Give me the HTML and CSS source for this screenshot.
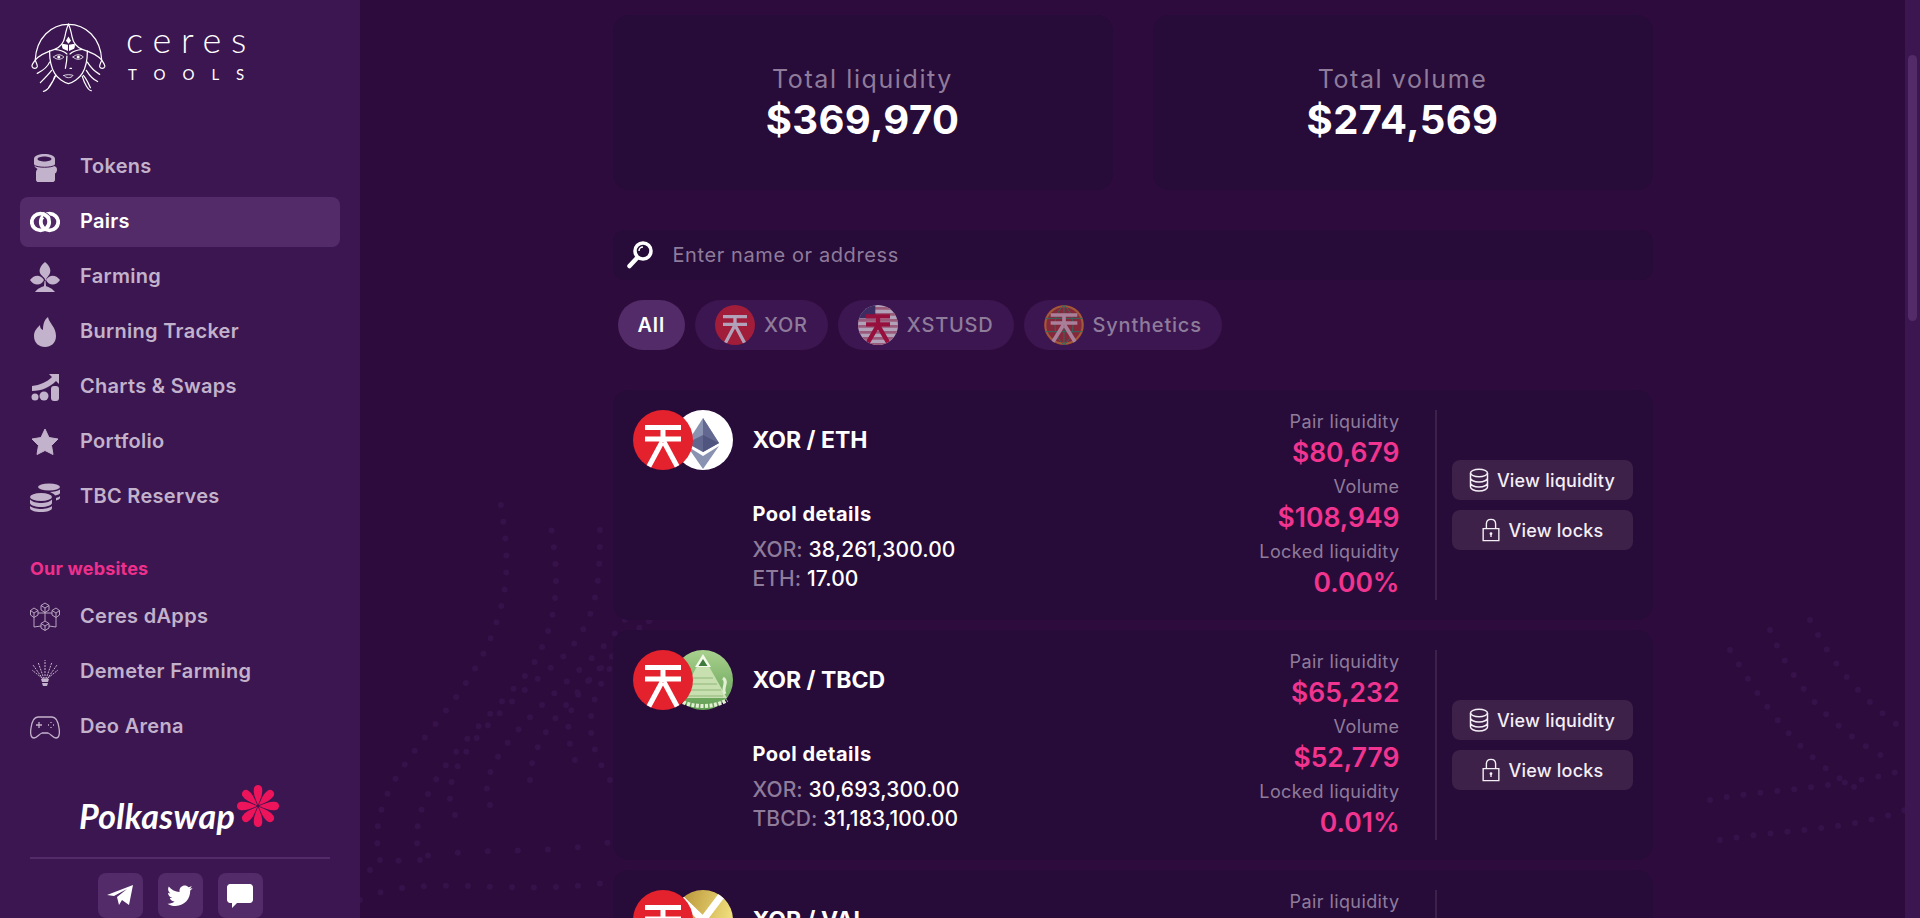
FILE: index.html
```html
<!DOCTYPE html>
<html lang="en">
  <head>
    <meta charset="UTF-8" />
    <title>Ceres Tools - Pairs</title>
    <link rel="stylesheet" href="styles.css">
  </head>
  <body>
    <!-- token logos, reused in the chips and the pair cards -->
    <svg class="sprite" aria-hidden="true">
      <defs>
        <clipPath id="round"><circle cx="30" cy="30" r="30"/></clipPath>
        <linearGradient id="gold" x1="0" y1="0" x2="1" y2="0.3">
          <stop offset="0" stop-color="#b08a2e"/>
          <stop offset="1" stop-color="#f0dd7c"/>
        </linearGradient>
        <linearGradient id="green" x1="0" y1="0" x2="0" y2="1">
          <stop offset="0" stop-color="#a9d18e"/>
          <stop offset="1" stop-color="#5f9e52"/>
        </linearGradient>
      </defs>
      <symbol id="glyph" viewBox="0 0 60 60">
        <path d="M12 17.500H48M12 29H48M30 17.500V32M29 32L15 58M31 32L45 58" fill="none" stroke="currentColor" stroke-width="5"/>
      </symbol>
      <symbol id="xor" viewBox="0 0 60 60">
        <g clip-path="url(#round)">
          <rect width="60" height="60" fill="#e4222d"/>
          <use href="#glyph" width="60" height="60" color="#fff"/>
        </g>
      </symbol>
      <symbol id="eth" viewBox="0 0 60 60">
        <circle cx="30" cy="30" r="30" fill="#fff"/>
        <path d="M30 8L14 33L30 42L46 33Z" fill="#8a92b2"/>
        <path d="M30 8V42L46 33Z" fill="#62688f"/>
        <path d="M14 36L30 59L46 36L30 46Z" fill="#8a92b2"/>
        <path d="M30 25L14 33L30 42L46 33Z" fill="#454a75" opacity=".6"/>
      </symbol>
      <symbol id="tbcd" viewBox="0 0 60 60">
        <circle cx="30" cy="30" r="30" fill="url(#green)"/>
        <path d="M30 6L54 48H6Z" fill="#c8dfb0"/>
        <path d="M30 4L38 17H22Z" fill="#f4f9ea"/>
        <path d="M30 9L34.500 16H25.500Z" fill="#3e7a3b"/>
        <path d="M12 40H48M10 46H50M16 34H44M20 28H40" stroke="#a3c58a" stroke-width="1.500"/>
        <path d="M6 50C18 58 42 58 54 50" fill="none" stroke="#e3efd4" stroke-width="4" stroke-dasharray="3 1.500"/>
        <path d="M50 28C56 32 48 38 52 44" fill="none" stroke="#e3efd4" stroke-width="3"/>
      </symbol>
      <symbol id="val" viewBox="0 0 60 60">
        <g clip-path="url(#round)">
          <rect width="60" height="60" fill="url(#gold)"/>
          <path d="M2 3L30 30L52 1M30 30V60" fill="none" stroke="#fff" stroke-width="7"/>
        </g>
      </symbol>
      <symbol id="xstusd" viewBox="0 0 60 60">
        <g clip-path="url(#round)">
          <rect width="60" height="60" fill="#fff"/>
          <path d="M0 5H60M0 14H60M0 23H60M0 32H60M0 41H60M0 50H60M0 59H60" stroke="#d98a96" stroke-width="4"/>
          <rect width="26" height="20" fill="#3c3b6e"/>
          <path d="M12 17H48M12 29H48M30 17V32M29 32L15 56M31 32L45 56" fill="none" stroke="#d40c32" stroke-width="6.500"/>
        </g>
      </symbol>
      <symbol id="synth" viewBox="0 0 60 60">
        <g clip-path="url(#round)">
          <rect width="60" height="60" fill="#b8352f"/>
          <circle cx="30" cy="30" r="28" fill="none" stroke="#e08a2a" stroke-width="3"/>
          <path d="M30 0C12 15 12 45 30 60C48 45 48 15 30 0ZM0 20H60M0 40H60M30 0V60" fill="none" stroke="#27a06a" stroke-width="1.500"/>
          <path d="M10 15H50M10 27H50M30 15V30M29 30L13 56M31 30L47 56" fill="none" stroke="#f2c6cc" stroke-width="5.500"/>
        </g>
      </symbol>
    </svg>

    <div class="app">
      <aside class="sidebar">
        <div class="brand">
          <svg class="brand-logo" viewBox="0 0 90 80" fill="none" stroke="#fff" stroke-width="1.200" stroke-linecap="round">
            <path d="M11 44C12 22 27 9 43.500 9C60 9 75 22 76 44"/>
            <path d="M11 44C9 47 7 49 8 50.500C9 52.500 12 52.500 13 50.500C13.500 49 12 47 11 44C15 39 22 36 30 33.500C36 31 39 27 40 21C41 16 42 12 43.500 9C45 12 46 16 47 21C48 27 51 31 57 33.500C65 36 72 39 76 44C75 47 73.500 49 74 50.500C75 52.500 78 52.500 79 50.500C79.500 49 78 47 76 44"/>
            <path d="M25 35C25 43 27 52 30 57C33 62 39 66 43.500 67C48 66 54 62 57 57C60 52 62 43 62 35"/>
            <path d="M30 33.500C35 34 39 35 42 38M57 33.500C52 34 48 35 45 38"/>
            <path d="M29 41C32 38 36 38 39 41C36 44 32 44 29 41ZM48 41C51 38 55 38 58 41C55 44 51 44 48 41Z" stroke-width=".8"/>
            <circle cx="34" cy="41" r="1.500" fill="#fff" stroke="none"/>
            <circle cx="53" cy="41" r="1.500" fill="#fff" stroke="none"/>
            <path d="M42 40C42 45 41 49 40.500 52M45 52H46.500"/>
            <path d="M39 59C41 58 46 58 48 59C46 62 41 62 39 59Z" stroke-width=".8"/>
            <path d="M43.500 21L46 25L43.500 28L41 25Z" fill="#fff" stroke="none"/>
            <path d="M43 29L43 35L38 33C37 31 37 30 37.500 28ZM44 29V35L49 33C50 31 50 30 49.500 28Z" fill="#fff" stroke="none"/>
            <path d="M25 46C23 51 19 54 13 57M27 54C24 58 20 62 16 66M31 59C29 64 26 68 24 71M58 59C61 62 63 67 65 71M61 54C64 59 68 63 72 65M62 46C65 51 69 55 74 58M30 60C28 67 23 74 19 74.500M57 60C59 67 63 74 66 74"/>
          </svg>
          <div class="brand-text">
            <span class="brand-name">ceres</span>
            <span class="brand-sub">TOOLS</span>
          </div>
        </div>

        <nav class="nav">
          <a class="nav-item">
            <svg class="nav-icon" viewBox="0 0 30 30" fill="currentColor"><path fill-rule="evenodd" d="M4 7C4 3.500 9 2 14.500 2S25 3.500 25 7V12C25 13 24.500 13.500 24 14C26 14.500 27 15.500 27 17.500C27 20 26 21 25 21.500V28C25 30 20 32 15 32S6 30 6 28V20C6 19 6.500 18 7.500 17C5.500 16 4 14 4 12ZM14.500 4.500C11 4.500 7.500 5.500 7.500 7S11 9.500 14.500 9.500S21.500 8.500 21.500 7S18 4.500 14.500 4.500Z"/><path d="M4 13C7 16 22 16 25 13" fill="none" stroke="#3c1650" stroke-width="1"/></svg>
            <span>Tokens</span>
          </a>
          <a class="nav-item active">
            <svg class="nav-icon" viewBox="0 0 30 30" fill="none" stroke="currentColor" stroke-width="3.800">
              <ellipse cx="10.500" cy="15" rx="8.700" ry="8.400"/>
              <ellipse cx="19.500" cy="15" rx="8.700" ry="8.400"/>
              <path d="M14 7.600C17 9 19.200 11.800 19.200 15" stroke="#522b68" stroke-width="5.800"/>
              <path d="M12.500 6.800C16.500 7.800 19.200 11 19.200 15"/>
            </svg>
            <span>Pairs</span>
          </a>
          <a class="nav-item">
            <svg class="nav-icon" viewBox="0 0 30 30" fill="currentColor"><path d="M15 0C20 4 21 8 20 11C19 14 16.500 15 15.700 19C15 15 11 14 10 11C9 8 10 4 15 0ZM0 18C4 13 10 12 14 18C11 24 4 24 0 18ZM30 18C26 13 20 12 16 18C19 24 26 24 30 18ZM14.500 19H15.500L16 24C18 25 22 26 25 30H5C8 26 12 25 14 24Z"/></svg>
            <span>Farming</span>
          </a>
          <a class="nav-item">
            <svg class="nav-icon" viewBox="0 0 30 30" fill="currentColor"><path d="M18 0C19 6 26 10 26 19C26 26 21 30 15 30S4 26 4 19C4 14 7 11 10 8C10 11 11 12 13 13C13 8 14 3 18 0Z"/></svg>
            <span>Burning Tracker</span>
          </a>
          <a class="nav-item">
            <svg class="nav-icon" viewBox="0 0 30 30" fill="currentColor"><path d="M2 14C10 13 17 10 22 5L19 2H29V12L26 9C20 15 12 19 2 19Z"/><circle cx="5" cy="25" r="3.500"/><circle cx="14" cy="24" r="4.500"/><rect x="21" y="14" width="8" height="15" rx="3"/></svg>
            <span>Charts &amp; Swaps</span>
          </a>
          <a class="nav-item">
            <svg class="nav-icon" viewBox="0 0 30 30" fill="currentColor"><path d="M15 2L19 10.500L28 12L21.500 18.500L23 27.500L15 23.500L7 27.500L8.500 18.500L2 12L11 10.500Z" stroke="currentColor" stroke-linejoin="round"/></svg>
            <span>Portfolio</span>
          </a>
          <a class="nav-item">
            <svg class="nav-icon" viewBox="0 0 30 30" fill="currentColor"><ellipse cx="19" cy="5" rx="11" ry="3.500"/><path d="M20 10C24 10 28 9 30 7.500V11C30 12 28 13 25 13.500C24 11.500 22 11 20 10ZM26 16C28 15.500 29 15 30 14V16C30 17 28 18 26 18.500Z"/><ellipse cx="11" cy="15" rx="11" ry="4"/><path d="M0 17.500C2 20 7 21 11 21S20 20 22 17.500V21C22 23 17 25 11 25S0 23 0 21ZM0 24C2 26 7 27 11 27S20 26 22 24V26C22 28.500 17 30 11 30S0 28.500 0 26Z"/></svg>
            <span>TBC Reserves</span>
          </a>
        </nav>

        <div class="nav-title">Our websites</div>
        <nav class="nav">
          <a class="nav-item">
            <svg class="nav-icon" viewBox="0 0 30 30" fill="none" stroke="currentColor" stroke-width=".9"><path d="M15 1L19 3.500V8L15 10.500L11 8V3.500ZM11 3.500L15 6L19 3.500M15 6V10.500M4 6L8 8.500V13L4 15.500L0.500 13V8.500ZM0.500 8.500L4 11L8 8.500M4 11V15.500M26 6L29.500 8.500V13L26 15.500L22 13V8.500ZM22 8.500L26 11L29.500 8.500M26 11V15.500M15 19L19 21.500V26L15 28.500L11 26V21.500ZM11 21.500L15 24L19 21.500M15 24V28.500M4 15.500V25L11 24M26 15.500V25L19 24M8 11H22M15 10.500V19"/></svg>
            <span>Ceres dApps</span>
          </a>
          <a class="nav-item">
            <svg class="nav-icon" viewBox="0 0 30 30" fill="none" stroke="currentColor" stroke-width="1"><path d="M13 22L3 8M14 22L8 5M15 22V3M16 22L22 5M17 22L27 8M12 21L2 13M18 21L28 13" stroke-dasharray="2 1"/><path d="M11 22H19L18 25H12ZM12 26H18L17 29H13Z" fill="currentColor" stroke="none"/></svg>
            <span>Demeter Farming</span>
          </a>
          <a class="nav-item">
            <svg class="nav-icon" viewBox="0 0 30 30" fill="none" stroke="currentColor" stroke-width="1.300"><path d="M8 5H22C26 5 28 9 29 16C30 22 29 26 26 26C23 26 21 22 18 21H12C9 22 7 26 4 26C1 26 0 22 1 16C2 9 4 5 8 5Z"/><path d="M6 13H12M9 10V16M21 10V11M21 15V16M18 13H19M23 13H24"/></svg>
            <span>Deo Arena</span>
          </a>
        </nav>

        <div class="polka">
          <span class="polka-name">Polkaswap</span>
          <svg class="polka-flower" viewBox="0 0 46 46" fill="#ed145b">
            <path d="M23 22C20 15 18 10 19 5C20 1 26 1 27 5C28 10 26 15 23 22Z"/>
            <path d="M23 22C20 15 18 10 19 5C20 1 26 1 27 5C28 10 26 15 23 22Z" transform="rotate(45 23 23)"/>
            <path d="M23 22C20 15 18 10 19 5C20 1 26 1 27 5C28 10 26 15 23 22Z" transform="rotate(90 23 23)"/>
            <path d="M23 22C20 15 18 10 19 5C20 1 26 1 27 5C28 10 26 15 23 22Z" transform="rotate(135 23 23)"/>
            <path d="M23 22C20 15 18 10 19 5C20 1 26 1 27 5C28 10 26 15 23 22Z" transform="rotate(180 23 23)"/>
            <path d="M23 22C20 15 18 10 19 5C20 1 26 1 27 5C28 10 26 15 23 22Z" transform="rotate(225 23 23)"/>
            <path d="M23 22C20 15 18 10 19 5C20 1 26 1 27 5C28 10 26 15 23 22Z" transform="rotate(270 23 23)"/>
            <path d="M23 22C20 15 18 10 19 5C20 1 26 1 27 5C28 10 26 15 23 22Z" transform="rotate(315 23 23)"/>
          </svg>
        </div>
        <div class="side-line"></div>
        <div class="socials">
          <a class="social"><svg viewBox="0 0 26 24" fill="#fff"><path d="M0 11L26 1L22 21L15 16L12 21L10 13L20 5L7 12Z"/></svg></a>
          <a class="social"><svg viewBox="0 0 26 24" fill="#fff"><path d="M25.500 4C24.500 4.500 23.500 4.700 22.500 4.800C23.600 4.100 24.400 3.100 24.800 2C23.800 2.600 22.700 3 21.500 3.200C20.500 2.200 19.200 1.500 17.700 1.500C14.800 1.500 12.500 3.800 12.500 6.700C12.500 7.100 12.500 7.500 12.600 7.900C8.300 7.700 4.400 5.600 1.800 2.400C1.400 3.200 1.100 4.100 1.100 5C1.100 6.800 2 8.400 3.400 9.300C2.500 9.300 1.700 9 1 8.700C1 11.200 2.800 13.300 5.200 13.800C4.400 14 3.500 14.100 2.800 13.900C3.400 15.900 5.400 17.500 7.600 17.500C5.800 18.900 3 20 0.500 19.700C2.800 21.200 5.500 22 8.500 22C18 22 23.200 14.100 23.200 7.300V6.600C24.100 5.900 24.900 5 25.500 4Z"/></svg></a>
          <a class="social"><svg viewBox="0 0 26 24" fill="#fff"><path d="M3 0H23C24.500 0 26 1.500 26 3V16C26 17.500 24.500 19 23 19H10L5 24V19H3C1.500 19 0 17.500 0 16V3C0 1.500 1.500 0 3 0Z"/></svg></a>
        </div>
      </aside>

      <main class="main">
        <!-- faint dotted waves behind the page -->
        <svg class="dots" viewBox="0 0 1545 918" fill="none" stroke="#36124a" stroke-width="6" stroke-linecap="round" stroke-dasharray="0 17">
          <path d="M20 860C0 780 90 730 130 640C150 590 150 560 140 500"/>
          <path d="M60 860C40 790 120 730 170 670C200 620 200 580 190 520"/>
          <path d="M95 815C70 770 140 710 200 660C240 620 240 580 240 520"/>
          <path d="M130 805C110 760 190 700 240 650C280 610 290 570 300 510"/>
          <path d="M170 780C170 730 230 680 270 640C310 600 340 570 360 500"/>
          <path d="M215 760C190 700 240 670 280 630C320 590 350 560 400 520"/>
          <path d="M250 780C210 720 240 680 270 640C290 610 330 580 400 550"/>
          <path d="M1370 650C1400 700 1440 760 1500 790"/>
          <path d="M1410 630C1430 680 1470 730 1530 760"/>
          <path d="M1450 620C1470 660 1500 700 1545 730"/>
          <path d="M1350 800C1400 790 1470 790 1545 770"/>
          <path d="M1360 840C1420 830 1490 830 1545 810"/>
          <path d="M0 900C60 870 160 900 260 880" stroke-dasharray="0 22"/>
          <path d="M10 870C80 840 180 860 260 840" stroke-dasharray="0 30"/>
        </svg>

        <div class="content">
          <section class="totals">
            <div class="total">
              <div class="total-label">Total liquidity</div>
              <div class="total-value">$369,970</div>
            </div>
            <div class="total">
              <div class="total-label">Total volume</div>
              <div class="total-value">$274,569</div>
            </div>
          </section>

          <div class="search">
            <svg class="search-icon" viewBox="0 0 26 30" fill="none" stroke="#fff">
              <circle cx="16" cy="11" r="8" stroke-width="3.500"/>
              <path d="M10 18L2.500 26" stroke-width="4.500" stroke-linecap="round"/>
              <path d="M12 11C12 8.500 14 7 16 7" stroke-width="1.500"/>
            </svg>
            <input class="search-input" placeholder="Enter name or address">
          </div>

          <div class="chips">
            <span class="chip active">All</span>
            <span class="chip"><svg class="chip-icon"><use href="#xor"/></svg>XOR</span>
            <span class="chip"><svg class="chip-icon"><use href="#xstusd"/></svg>XSTUSD</span>
            <span class="chip"><svg class="chip-icon"><use href="#synth"/></svg>Synthetics</span>
          </div>

          <article class="pair">
            <div class="pair-info">
              <div class="pair-head">
                <div class="pair-icons">
                  <svg class="token token-front"><use href="#xor"/></svg>
                  <svg class="token token-back"><use href="#eth"/></svg>
                </div>
                <div class="pair-name">XOR / ETH</div>
              </div>
              <div class="pool">
                <div class="pool-title">Pool details</div>
                <div class="pool-row"><span>XOR:</span> 38,261,300.00</div>
                <div class="pool-row"><span>ETH:</span> 17.00</div>
              </div>
            </div>
            <div class="pair-stats">
              <div class="stat-label">Pair liquidity</div>
              <div class="stat-value">$80,679</div>
              <div class="stat-label">Volume</div>
              <div class="stat-value">$108,949</div>
              <div class="stat-label">Locked liquidity</div>
              <div class="stat-value">0.00%</div>
            </div>
            <div class="pair-actions">
              <a class="btn">
                <svg class="btn-icon" viewBox="0 0 20 24" fill="none" stroke="currentColor" stroke-width="1.500"><ellipse cx="10" cy="5" rx="8.500" ry="3.800"/><path d="M1.500 5V19C1.500 21 5 23 10 23S18.500 21 18.500 19V5M1.500 10C1.500 12 5 14 10 14S18.500 12 18.500 10M1.500 15C1.500 17 5 19 10 19S18.500 17 18.500 15"/></svg>
                View liquidity
              </a>
              <a class="btn">
                <svg class="btn-icon" viewBox="0 0 20 26" fill="none" stroke="currentColor" stroke-width="1.500"><path d="M1.500 11.500H18.500V24.500H1.500ZM5 11.500V6.500C5 3.500 7 1.500 10 1.500S15 3.500 15 6.500V11.500"/><circle cx="10" cy="17" r="1.500" fill="currentColor" stroke="none"/><path d="M10 17V20.500"/></svg>
                View locks
              </a>
            </div>
          </article>

          <article class="pair">
            <div class="pair-info">
              <div class="pair-head">
                <div class="pair-icons">
                  <svg class="token token-front"><use href="#xor"/></svg>
                  <svg class="token token-back"><use href="#tbcd"/></svg>
                </div>
                <div class="pair-name">XOR / TBCD</div>
              </div>
              <div class="pool">
                <div class="pool-title">Pool details</div>
                <div class="pool-row"><span>XOR:</span> 30,693,300.00</div>
                <div class="pool-row"><span>TBCD:</span> 31,183,100.00</div>
              </div>
            </div>
            <div class="pair-stats">
              <div class="stat-label">Pair liquidity</div>
              <div class="stat-value">$65,232</div>
              <div class="stat-label">Volume</div>
              <div class="stat-value">$52,779</div>
              <div class="stat-label">Locked liquidity</div>
              <div class="stat-value">0.01%</div>
            </div>
            <div class="pair-actions">
              <a class="btn">
                <svg class="btn-icon" viewBox="0 0 20 24" fill="none" stroke="currentColor" stroke-width="1.500"><ellipse cx="10" cy="5" rx="8.500" ry="3.800"/><path d="M1.500 5V19C1.500 21 5 23 10 23S18.500 21 18.500 19V5M1.500 10C1.500 12 5 14 10 14S18.500 12 18.500 10M1.500 15C1.500 17 5 19 10 19S18.500 17 18.500 15"/></svg>
                View liquidity
              </a>
              <a class="btn">
                <svg class="btn-icon" viewBox="0 0 20 26" fill="none" stroke="currentColor" stroke-width="1.500"><path d="M1.500 11.500H18.500V24.500H1.500ZM5 11.500V6.500C5 3.500 7 1.500 10 1.500S15 3.500 15 6.500V11.500"/><circle cx="10" cy="17" r="1.500" fill="currentColor" stroke="none"/><path d="M10 17V20.500"/></svg>
                View locks
              </a>
            </div>
          </article>

          <article class="pair">
            <div class="pair-info">
              <div class="pair-head">
                <div class="pair-icons">
                  <svg class="token token-front"><use href="#xor"/></svg>
                  <svg class="token token-back"><use href="#val"/></svg>
                </div>
                <div class="pair-name">XOR / VAL</div>
              </div>
            </div>
            <div class="pair-stats">
              <div class="stat-label">Pair liquidity</div>
            </div>
            <div class="pair-actions"></div>
          </article>
        </div>
      </main>

      <div class="scrollbar"><div class="scrollbar-thumb"></div></div>
    </div>
  </body>
</html>
```

FILE: styles.css
```css
* {
  box-sizing: border-box;
}

html,
body {
  margin: 0;
  height: 100%;
  overflow: hidden;
}

body {
  background-color: #2e0b3d;
  color: #fff;
  font-family: Inter, "Noto Sans", sans-serif;
}

.sprite {
  position: absolute;
  width: 0;
  height: 0;
}

.app {
  display: flex;
  height: 918px;
}

/* sidebar */
.sidebar {
  width: 360px;
  flex-shrink: 0;
  padding: 15px 20px 0;
  background-color: #3c1650;
  overflow: hidden;
}

.brand {
  display: flex;
  align-items: flex-start;
  height: 127px;
  margin-left: 4px;
}

.brand-logo {
  width: 92px;
  height: 82px;
}

.brand-text {
  display: flex;
  flex-direction: column;
  margin: 2px 0 0 10px;
}

.brand-name {
  font-family: Lato, sans-serif;
  font-size: 36px;
  font-weight: 300;
  line-height: 44px;
  letter-spacing: 9.800px;
}

.brand-sub {
  margin: 3px 0 0 2px;
  font-family: Lato, sans-serif;
  font-size: 15px;
  font-weight: 400;
  line-height: 20px;
  letter-spacing: 17px;
}

.nav-item {
  display: flex;
  align-items: center;
  gap: 20px;
  height: 50px;
  margin-bottom: 5px;
  padding-left: 10px;
  border-radius: 8px;
  color: #c3b2cb;
  font-size: 20px;
  font-weight: 600;
  letter-spacing: .3px;
}

.nav-item span {
  padding-bottom: 2px;
}

.nav-item.active {
  background-color: #522b68;
  color: #fff;
}

.nav-icon {
  width: 30px;
  height: 30px;
  flex-shrink: 0;
}

.nav-title {
  margin: 35px 0 11px;
  padding-left: 10px;
  color: #ee2f8c;
  font-size: 18px;
  font-weight: 700;
  line-height: 24px;
  letter-spacing: .2px;
}

.polka {
  display: flex;
  align-items: flex-start;
  justify-content: center;
  height: 59px;
  margin-top: 31px;
}

.polka-name {
  margin-top: 13px;
  font-family: Lato, sans-serif;
  font-size: 34px;
  font-style: italic;
  font-weight: 700;
  line-height: 40px;
  letter-spacing: .3px;
}

.polka-flower {
  width: 46px;
  height: 46px;
}

.side-line {
  height: 2px;
  margin: 15px 10px 0;
  background-color: #522b68;
}

.socials {
  display: flex;
  justify-content: center;
  gap: 15px;
  margin-top: 14px;
}

.social {
  display: flex;
  align-items: center;
  justify-content: center;
  width: 45px;
  height: 45px;
  border-radius: 8px;
  background-color: #522b68;
}

.social svg {
  width: 26px;
  height: 24px;
}

/* main column */
.main {
  position: relative;
  flex: 1;
  overflow: hidden;
}

.dots {
  position: absolute;
  left: 0;
  top: 0;
  width: 100%;
  height: 100%;
}

.content {
  position: relative;
  width: 1040px;
  margin: 0 auto;
  padding-top: 15px;
}

.totals {
  display: flex;
  justify-content: space-between;
  margin-bottom: 40px;
}

.total {
  display: flex;
  flex-direction: column;
  align-items: center;
  width: 500px;
  height: 175px;
  padding-top: 48px;
  border-radius: 16px;
  background-color: #270b38;
}

.total-label {
  color: #8f7c9b;
  font-size: 25px;
  line-height: 32px;
  letter-spacing: 1.600px;
}

.total-value {
  font-size: 40px;
  font-weight: 700;
  line-height: 50px;
  letter-spacing: .4px;
}

.search {
  display: flex;
  align-items: center;
  height: 50px;
  margin-bottom: 20px;
  padding-left: 14px;
  border-radius: 12px;
  background-color: #270b38;
}

.search-icon {
  width: 26px;
  height: 30px;
  flex-shrink: 0;
}

.search-input {
  flex: 1;
  margin-left: 20px;
  padding: 0;
  border: 0;
  outline: 0;
  background: none;
  color: #fff;
  font-family: inherit;
  font-size: 20px;
  letter-spacing: .6px;
}

.search-input::placeholder {
  color: #8f7c9b;
  opacity: 1;
}

.chips {
  display: flex;
  gap: 10px;
  margin-bottom: 40px;
  padding-left: 5px;
}

.chip {
  display: flex;
  align-items: center;
  gap: 9px;
  height: 50px;
  padding: 0 20px;
  border-radius: 25px;
  background-color: #3c1650;
  color: #8f7c9b;
  font-size: 20px;
  font-weight: 500;
  letter-spacing: .8px;
}

.chip.active {
  background-color: #522b68;
  color: #fff;
  font-weight: 600;
}

.chip-icon {
  width: 40px;
  height: 40px;
  opacity: .6;
}

/* pair cards */
.pair {
  display: flex;
  height: 230px;
  margin-bottom: 10px;
  padding: 20px;
  border-radius: 16px;
  background-color: #270b38;
}

.pair-info {
  flex: 1;
}

.pair-head {
  display: flex;
  align-items: center;
}

.pair-icons {
  display: flex;
}

.token {
  display: block;
  width: 60px;
  height: 60px;
}

.token-front {
  position: relative;
  z-index: 1;
}

.token-back {
  margin-left: -20px;
}

.pair-name {
  margin-left: 20px;
  font-size: 23px;
  font-weight: 700;
}

.pool {
  margin: 32px 0 0 120px;
}

.pool-title {
  font-size: 20px;
  font-weight: 700;
  line-height: 24px;
  margin-bottom: 9px;
  letter-spacing: .5px;
}

.pool-row {
  font-size: 21px;
  font-weight: 500;
  line-height: 29px;
  letter-spacing: .1px;
}

.pool-row span {
  color: #8f7c9b;
}

.pair-stats {
  padding-right: 35px;
  text-align: right;
}

.stat-label {
  color: #8f7c9b;
  font-size: 18px;
  line-height: 24px;
  letter-spacing: .4px;
}

.stat-value {
  margin-bottom: 5px;
  color: #f0348f;
  font-size: 26.500px;
  font-weight: 600;
  line-height: 36px;
}

.pair-actions {
  display: flex;
  flex-direction: column;
  justify-content: center;
  flex-shrink: 0;
  gap: 10px;
  width: 198px;
  padding-left: 15px;
  border-left: 2px solid #3d2149;
}

.btn {
  display: flex;
  align-items: center;
  justify-content: center;
  gap: 8px;
  height: 40px;
  border-radius: 8px;
  background-color: #3d2149;
  color: #f4eef6;
  font-size: 18px;
  font-weight: 500;
  letter-spacing: .2px;
}

.btn-icon {
  width: 20px;
  height: 24px;
}

.scrollbar {
  width: 15px;
  flex-shrink: 0;
  padding: 55px 3px 0;
  background-color: #3c1650;
}

.scrollbar-thumb {
  height: 266px;
  border-radius: 5px;
  background-color: #522b68;
}
```
